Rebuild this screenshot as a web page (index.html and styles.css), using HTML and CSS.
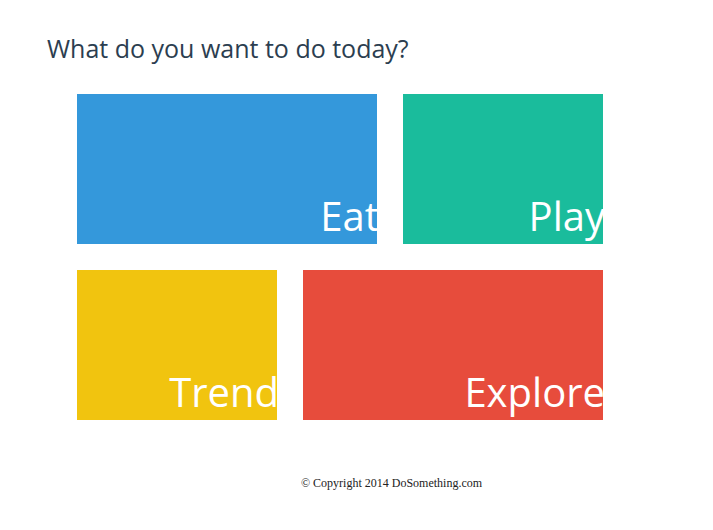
FILE: index.html
```
<!DOCTYPE html>
<html>
<head>
<meta charset="utf-8">
<link rel="stylesheet" href="styles.css">
</head>
<body>
<h1 class="title">What do you want to do today?</h1>
<div class="tiles">
  <div class="row">
    <a class="tile wide blue"><span class="label">Eat</span></a>
    <a class="tile narrow green"><span class="label">Play</span></a>
  </div>
  <div class="row">
    <a class="tile narrow yellow"><span class="label">Trend</span></a>
    <a class="tile wide red"><span class="label">Explore</span></a>
  </div>
</div>
<footer class="footer">© Copyright 2014 DoSomething.com</footer>
</body>
</html>
```
FILE: styles.css
```
html, body { margin: 0; padding: 0; background: #fff; }
body { width: 713px; }
.title {
  font-family: "Open Sans", sans-serif;
  font-weight: 400;
  font-size: 25px;
  color: #2c3e50;
  margin: 0;
  padding: 31px 0 0 47px;
  line-height: 34px;
}
.tiles {
  margin: 29px 0 0 77px;
  width: 526px;
  display: flex;
  flex-direction: column;
  gap: 26px;
}
.row { display: flex; gap: 26px; }
.tile {
  height: 150px;
  display: flex;
  align-items: flex-end;
  justify-content: flex-end;
  overflow: hidden;
}
.wide { width: 300px; }
.narrow { width: 200px; }
.blue { background: #3498db; }
.green { background: #1abc9c; }
.yellow { background: #f1c40f; }
.red { background: #e74c3c; }
.label {
  font-family: "Open Sans", sans-serif;
  font-size: 40px;
  line-height: 40px;
  color: #fff;
  margin: 0 -2px 8px 0;
}
.footer {
  font-family: "Liberation Serif", serif;
  font-size: 12px;
  color: #222;
  text-align: center;
  padding-left: 70px;
  margin-top: 56px;
}
```
